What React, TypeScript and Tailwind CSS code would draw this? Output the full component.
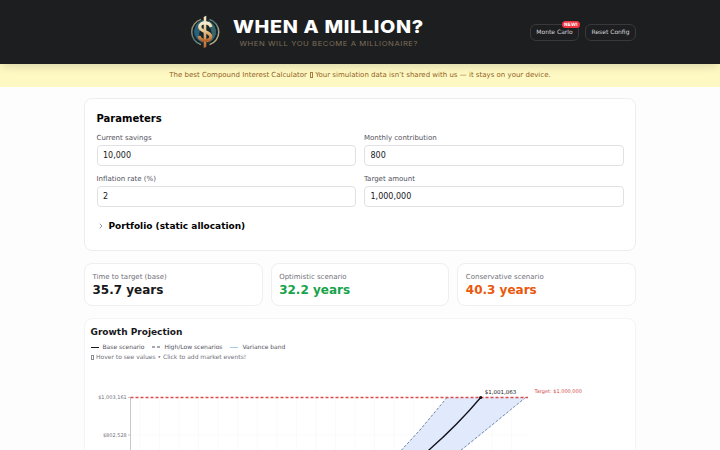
import { ChevronRight } from "lucide-react"

const fields = [
  { label: "Current savings", value: "10,000" },
  { label: "Monthly contribution", value: "800" },
  { label: "Inflation rate (%)", value: "2" },
  { label: "Target amount", value: "1,000,000" },
]

const scenarios = [
  { label: "Time to target (base)", value: "35.7 years", color: "text-[#18181b]" },
  { label: "Optimistic scenario", value: "32.2 years", color: "text-[#16a34a]" },
  { label: "Conservative scenario", value: "40.3 years", color: "text-[#ea580c]" },
]

const gridLines = Array.from({ length: 20 }, (_, i) => 55.5 + i * 19.55)

function Logo() {
  return (
    <svg width="240" height="44" viewBox="186 10 240 44" className="block">
      <defs>
        <linearGradient id="gold" x1="0" y1="0" x2="0" y2="1">
          <stop offset="0" stopColor="#f5edcf" />
          <stop offset="0.45" stopColor="#e8c68c" />
          <stop offset="1" stopColor="#b9652a" />
        </linearGradient>
        <linearGradient id="ring" x1="0" y1="0" x2="1" y2="1">
          <stop offset="0" stopColor="#b39a68" />
          <stop offset="0.45" stopColor="#557b7e" />
          <stop offset="1" stopColor="#ddc38c" />
        </linearGradient>
      </defs>
      <circle cx="205.2" cy="32" r="12" fill="#14252c" />
      <path d="M196 25 Q200 20 204 20 L199 34 L203 43 Q194 39 194 31Z" fill="#286178" />
      <path d="M208 20 Q217 25 216 34 Q214 41 207 43 L212 34Z" fill="#37636a" />
      <path d="M201 19.4 A13.2 13.2 0 0 0 201 44.6 M209.5 19.4 A13.2 13.2 0 0 1 209.5 44.6" fill="none" stroke="url(#ring)" strokeWidth="1.5" />
      <path d="M203.7 17 L206.3 15.8 V47 L203.7 48Z" fill="url(#gold)" />
      <path
        d="M211 27 C209.5 21.5 199.7 21.8 199.7 26.8 C199.7 32.5 210.8 30.8 210.8 36.7 C210.8 41.7 200.5 42 199 36.2"
        fill="none"
        stroke="url(#gold)"
        strokeWidth="3.2"
      />
      <text x="233" y="32.6" textLength="191" lengthAdjust="spacingAndGlyphs" className="fill-white font-[Inter,sans-serif] text-[17.6px] font-extrabold tracking-[0.6px]">
        WHEN A MILLION?
      </text>
      <text x="239.5" y="45.7" textLength="178.5" lengthAdjust="spacingAndGlyphs" className="fill-[#7d7059] font-[Inter,sans-serif] text-[6.8px] tracking-[0.5px]">
        WHEN WILL YOU BECOME A MILLIONAIRE?
      </text>
    </svg>
  )
}

function GrowthChart() {
  return (
    <svg width="539" height="90" viewBox="90 366 539 90" className="block overflow-visible">
      <g transform="translate(84.5 0)" stroke="#f4f4f5" strokeWidth="0.5">
        {gridLines.map((x) => (
          <line key={x} x1={x} x2={x} y1="398" y2="456" />
        ))}
        <line x1="46" x2="443" y1="435" y2="435" />
      </g>
      <path d="M447 397.5 H526 L492 426 L455 456 H396 L402 449 L420 429Z" fill="#e0eafc" />
      <g fill="none" stroke="#64748b" strokeWidth="0.9" strokeDasharray="2.5 2">
        <path d="M447 397.5 L420 430 L396 456" />
        <path d="M525.5 397.5 Q492 425 455 455" />
      </g>
      <path d="M480.7 397.5 Q455 428 422 456" fill="none" stroke="#111118" strokeWidth="1.3" />
      <path d="M130.5 397.5 V456 M128 397.5 H130.5 M128 435 H130.5" fill="none" stroke="#a1a1aa" strokeWidth="0.6" />
      <path d="M130.5 397.5 H528" fill="none" stroke="#dc4a4a" strokeWidth="1.4" strokeDasharray="3 2" />
      <circle cx="480.7" cy="397.5" r="1.6" fill="#111118" />
      <g className="font-['DejaVu_Sans',sans-serif] text-[5px]">
        <text x="126.8" y="399.3" textAnchor="end" fill="#71717a">$1,003,161</text>
        <text x="126.8" y="436.9" textAnchor="end" fill="#71717a">$802,528</text>
        <text x="534.5" y="393.3" fill="#d24545">Target: $1,000,000</text>
        <text x="484.7" y="393.7" fill="#18181b" className="text-[5.5px]">$1,001,063</text>
      </g>
    </svg>
  )
}

export default function App() {
  return (
    <div className="h-[450px] overflow-hidden bg-[#fdfdfd] font-['DejaVu_Sans',sans-serif] text-[8px] leading-[12px] text-[#18181b]">
      <header className="relative flex h-16 items-center justify-between bg-[#1d1e20] pr-[84px] pl-[186px] shadow-[0_5px_8px_-2px_rgba(0,0,0,0.13)]">
        <Logo />
        <div className="flex gap-1.5 text-[6px] leading-[8px] text-[#d4d4d8]">
          <button className="relative h-[17px] w-[49px] rounded-[6px] border-[0.5px] border-[#39393d]">
            Monte Carlo
            <span className="absolute -top-[3.5px] -right-[2px] flex h-[7px] w-[18px] items-center justify-center rounded-full bg-[#ef3340] text-[4.5px] font-bold text-white">
              NEW!
            </span>
          </button>
          <button className="h-[17px] w-[51px] rounded-[6px] border-[0.5px] border-[#39393d]">Reset Config</button>
        </div>
      </header>
      <div className="flex h-[23px] items-center justify-center bg-[#fef9c3] pb-[1px] text-[7px] text-[#92601f]">
        The best Compound Interest Calculator
        <span className="mr-[2.2px] ml-[2.7px] h-[6px] w-[3.4px] border-[0.5px] border-current opacity-80" />
        Your simulation data isn’t shared with us — it stays on your device.
      </div>

      <main className="mx-auto flex w-[552px] flex-col gap-3 pt-[11px]">
        <section className="h-[153px] rounded-[8px] border border-[#ededef] bg-white px-[11.5px] pt-[12.5px]">
          <h2 className="text-[10px] leading-[14px] font-bold text-black">Parameters</h2>
          <div className="mt-[7.5px] grid grid-cols-2 gap-x-2 gap-y-[8px]">
            {fields.map((field) => (
              <label key={field.label} className="block text-[7px] leading-[10px] text-[#52525b]">
                {field.label}
                <input
                  readOnly
                  value={field.value}
                  className="mt-[2px] block h-[21px] w-full rounded-[4px] border border-[#e1e1e4] bg-white px-[5.5px] text-[8px] text-[#18181b]"
                />
              </label>
            ))}
          </div>
          <div className="mt-[12px] flex items-center gap-1 text-[9px] leading-[14px] font-bold text-black">
            <ChevronRight size={8} strokeWidth={2.2} className="text-[#71717a]" />
            Portfolio (static allocation)
          </div>
        </section>

        <section className="grid grid-cols-3 gap-[8px]">
          {scenarios.map((item) => (
            <div key={item.label} className="h-[43px] rounded-[8px] border border-[#efeff0] bg-white px-[7.5px] pt-[8px]">
              <p className="text-[7px] leading-[10px] text-[#71717a]">{item.label}</p>
              <p className={`text-[12px] leading-[16px] font-bold ${item.color}`}>{item.value}</p>
            </div>
          ))}
        </section>

        <section className="h-[200px] rounded-t-[8px] border border-[#f4f4f5] bg-white px-[5px] pt-[6px]">
          <div className="pl-[0.5px]">
            <h2 className="text-[9px] leading-[14px] font-bold">Growth Projection</h2>
            <div className="mt-[4px] flex h-[8px] items-center gap-2 text-[6px] leading-[8px] text-[#52525b]">
              <span className="flex items-center gap-1">
                <span className="w-2 border-t border-[#18181b]" />
                Base scenario
              </span>
              <span className="flex items-center gap-1">
                <svg width="8" height="2"><path d="M0 1h8" stroke="#52525b" strokeDasharray="3 2" /></svg>
                High/Low scenarios
              </span>
              <span className="flex items-center gap-1">
                <span className="w-2 border-t border-[#a9cbe6]" />
                Variance band
              </span>
            </div>
            <p className="mt-[2px] flex items-center text-[6px] leading-[8px] text-[#71717a]">
              <span className="mr-[2px] ml-[0.5px] h-[5px] w-[3px] border-[0.5px] border-current opacity-80" />
              Hover to see values • Click to add market events!
            </p>
          </div>
          <div className="mt-[5px]">
            <GrowthChart />
          </div>
        </section>
      </main>
    </div>
  )
}
